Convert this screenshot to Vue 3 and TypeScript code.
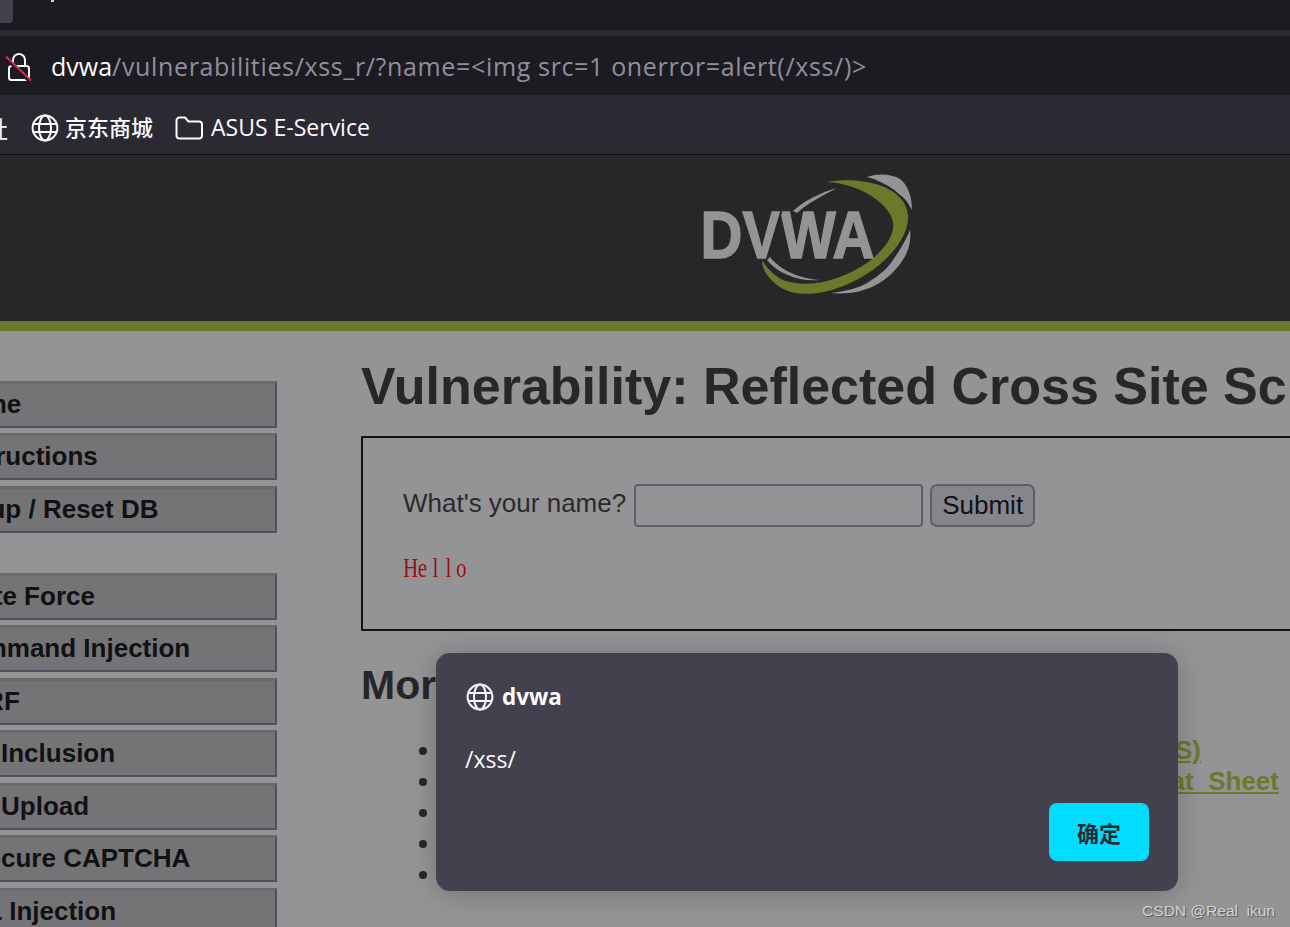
<script setup lang="ts">
const menuGroups: string[][] = [
  ['Home', 'Instructions', 'Setup / Reset DB'],
  ['Brute Force', 'Command Injection', 'CSRF', 'File Inclusion', 'File Upload', 'Insecure CAPTCHA', 'SQL Injection'],
];

const links: string[] = [
  'https://www.owasp.org/index.php/Cross-site_Scripting_(XSS)',
  'https://www.owasp.org/index.php/XSS_Filter_Evasion_Cheat_Sheet',
  'https://en.wikipedia.org/wiki/Cross-site_scripting',
  'http://www.cgisecurity.com/xss-faq.html',
  'http://www.scriptalert1.com/',
];

const hello = 'Hello'.split('');
</script>

<template>
  <div class="window">
    <div class="tabstrip">
      <div class="tab"></div>
      <span class="tab-crumb"></span>
    </div>
    <div class="urlbar">
      <svg class="lock" width="30" height="30" viewBox="0 0 30 30" fill="none">
        <path d="M9 15V9a6 6 0 0 1 12 0v6" stroke="#fbfbfe" stroke-width="2" />
        <rect x="5" y="15" width="20" height="14" rx="2.500" stroke="#fbfbfe" stroke-width="2" />
        <path d="M0 6 25 30" stroke="#1c1b22" stroke-width="3" />
        <path d="M2 5.500 27 29.500" stroke="#e22850" stroke-width="2" />
      </svg>
      <div class="url"><span class="host">dvwa</span><span class="path">/vulnerabilities/xss_r/?name=&lt;img src=1 onerror=alert(/xss/)&gt;</span></div>
    </div>
    <div class="bookmarks">
      <span class="clipped">社</span>
      <div class="bookmark">
        <svg width="28" height="28" viewBox="0 0 28 28" fill="none" stroke="#fbfbfe" stroke-width="2">
          <circle cx="14" cy="14" r="12.400" />
          <ellipse cx="14" cy="14" rx="6" ry="12.400" />
          <path d="M2.500 10h23M2.500 18h23" />
        </svg>
        <span class="cjk">京东商城</span>
      </div>
      <div class="bookmark folder">
        <svg width="28" height="26" viewBox="0 0 28 26" fill="none" stroke="#fbfbfe" stroke-width="2" stroke-linejoin="round">
          <path d="M1.500 5.500a3 3 0 0 1 3-3h5.500l3.500 4h10.500a3 3 0 0 1 3 3v11a3 3 0 0 1-3 3h-19.500a3 3 0 0 1-3-3z" />
        </svg>
        <span>ASUS E-Service</span>
      </div>
    </div>

    <header class="site-header">
      <svg class="logo" width="214" height="124" viewBox="700 173 214 124">
        <defs>
          <filter id="soft"><feGaussianBlur stdDeviation="0.7" /></filter>
        </defs>
        <g filter="url(#soft)">
          <path fill="#949496" d="M793 211C805 200 822 192 837 188C822 196 806 204 797 213zM770 257C780 270 800 279 820 280C800 282 778 274 767 260zM867 177C878 173 892 174 900 179C908 185 912 197 912 210C908 203 905 198 900 195C896 190 880 180 867 177zM910 230C912 245 906 258 895 270C882 285 860 296 830 293C848 291 858 288 867 283C880 275 888 268 893 260C900 250 906 240 910 230z" />
          <path fill="#6a7a2b" d="M827 182C860 176 905 185 908 215C910 240 880 270 850 283C825 295 797 298 780 287C768 279 762 270 762 260C768 270 778 280 790 282C815 288 845 278 867 263C885 250 895 235 893 222C890 205 862 184 827 182z" />
          <text x="700.500" y="258" class="logo-text" textLength="174" lengthAdjust="spacingAndGlyphs">DVWA</text>
          <path d="M782 209 767 259" stroke="#272729" stroke-width="2" />
        </g>
      </svg>
    </header>
    <div class="accent"></div>

    <div class="page">
      <nav class="sidebar">
        <ul v-for="(group, g) in menuGroups" :key="g" class="menu">
          <li v-for="item in group" :key="item">{{ item }}</li>
        </ul>
      </nav>
      <main class="body">
        <h1>Vulnerability: Reflected Cross Site Scripting (XSS)</h1>
        <div class="vuln-box">
          <form class="name-form" @submit.prevent>
            <label for="name">What's your name?</label>
            <input id="name" type="text" />
            <button type="button">Submit</button>
          </form>
          <div class="hello"><span v-for="(ch, i) in hello" :key="i">{{ ch }}</span></div>
        </div>
        <h2>More Information</h2>
        <ul class="links">
          <li v-for="link in links" :key="link"><a href="#">{{ link }}</a></li>
        </ul>
      </main>
    </div>

    <div class="alert" role="alertdialog">
      <div class="alert-title">
        <svg width="28" height="28" viewBox="0 0 28 28" fill="none" stroke="#fbfbfe" stroke-width="2">
          <circle cx="14" cy="14" r="12.400" />
          <ellipse cx="14" cy="14" rx="6" ry="12.400" />
          <path d="M2.500 10h23M2.500 18h23" />
        </svg>
        <strong>dvwa</strong>
      </div>
      <p class="alert-msg">/xss/</p>
      <div class="alert-foot">
        <button type="button">确定</button>
      </div>
    </div>

    <div class="watermark">CSDN @Real&nbsp;&nbsp;ikun</div>
  </div>
</template>

<style scoped>
.window {
  position: relative;
  width: 1290px;
  height: 927px;
  overflow: hidden;
  display: flex;
  flex-direction: column;
  background: #949496;
  font-family: "Liberation Sans", Arial, sans-serif;
}

.tabstrip {
  height: 30px;
  flex: none;
  background: #1c1b22;
  display: flex;
  align-items: flex-start;
}

.tab {
  width: 13px;
  height: 23px;
  background: #42414d;
  border-radius: 0 0 4px 0;
}

.tab-crumb {
  width: 3px;
  height: 2px;
  margin-left: 38px;
  background: #cfcfd4;
}

.urlbar {
  height: 59px;
  flex: none;
  margin-top: 6px;
  background: #1c1b22;
  display: flex;
  align-items: center;
  padding-left: 4px;
  gap: 17px;
  box-shadow: 0 -6px 0 #2b2a33;
}

.lock {
  flex: none;
}

.url {
  font-family: "Open Sans", "Noto Sans", sans-serif;
  font-size: 25px;
  white-space: nowrap;
}

.host {
  color: #fbfbfe;
}

.path {
  color: #8f8f9d;
  letter-spacing: 0.650px;
}

.bookmarks {
  height: 53px;
  flex: none;
  background: #2b2a33;
  border-bottom: 1px solid #111114;
  box-sizing: content-box;
  display: flex;
  align-items: center;
  padding-top: 6px;
  color: #fbfbfe;
  font-family: "Open Sans", "Noto Sans CJK SC", sans-serif;
  font-size: 23px;
}

.clipped {
  width: 8px;
  margin-right: 23px;
  direction: rtl;
  overflow: hidden;
  font-family: "Noto Sans CJK SC", sans-serif;
}

.bookmark {
  display: flex;
  align-items: center;
  gap: 6px;
  white-space: nowrap;
}

.bookmark span {
  position: relative;
  top: -1px;
}

.bookmark .cjk {
  top: -2px;
  font-family: "Noto Sans CJK SC", sans-serif;
  font-size: 22px;
  font-weight: 500;
}

.folder {
  margin-left: 22px;
  gap: 8px;
}

.site-header {
  height: 166px;
  flex: none;
  background: #272729;
  display: flex;
  align-items: flex-start;
  padding: 18px 0 0 700px;
  box-sizing: border-box;
}

.logo-text {
  font-family: "Liberation Sans", sans-serif;
  font-weight: 700;
  font-size: 67px;
  fill: #949496;
  stroke: #949496;
  stroke-width: 1.500px;
}

.accent {
  height: 10px;
  flex: none;
  background: #6a7a2b;
}

.page {
  flex: 1;
  display: flex;
  align-items: flex-start;
  min-height: 0;
}

.sidebar {
  flex: none;
  width: 347px;
  margin-left: -70px;
  padding-top: 50px;
}

.menu {
  list-style: none;
  margin: 0 0 40px;
  padding: 0;
}

.menu li {
  height: 47px;
  margin-bottom: 5.450px;
  box-sizing: border-box;
  padding-left: 19px;
  background: #747476;
  border-top: 3px solid #6a6a6c;
  border-right: 2px solid #50505f;
  border-bottom: 2px solid #50505f;
  color: #111114;
  font-size: 26px;
  font-weight: 700;
  line-height: 40px;
  white-space: nowrap;
}

.body {
  flex: none;
  margin-left: 84px;
  width: 1100px;
}

h1 {
  margin: 23px 0 0;
  color: #272729;
  font-size: 52px;
  line-height: 64px;
  font-weight: 700;
  white-space: nowrap;
}

.vuln-box {
  margin-top: 18px;
  height: 195px;
  width: 1100px;
  box-sizing: border-box;
  border: 2px solid #111114;
  padding: 46px 0 0 40px;
}

.name-form {
  display: flex;
  align-items: center;
  height: 43px;
  font-size: 26px;
  color: #2a2a2a;
}

.name-form label {
  margin-top: -4px;
  white-space: nowrap;
}

.name-form input {
  width: 289px;
  height: 43px;
  margin-left: 8px;
  box-sizing: border-box;
  padding: 0;
  border: 2px solid #5f5f68;
  border-radius: 4px;
  background: #949496;
}

.name-form button {
  width: 105px;
  height: 43px;
  margin-left: 7px;
  padding: 0;
  box-sizing: border-box;
  border: 2px solid #5f5f68;
  border-radius: 7px;
  background: #85858c;
  color: #111114;
  font-family: inherit;
  font-size: 26px;
}

.hello {
  display: flex;
  margin: 24px 0 0;
  font-family: "Liberation Serif", serif;
  font-size: 28px;
  line-height: 34px;
  color: #9c0d0d;
  transform: scaleX(0.75);
  transform-origin: left center;
}

.hello span {
  width: 17.300px;
  text-align: center;
}

h2 {
  margin: 29px 0 0;
  color: #272729;
  font-size: 41px;
  line-height: 50px;
  font-weight: 700;
  white-space: nowrap;
}

.links {
  margin: 25px 0 0;
  padding: 0 0 0 81px;
  color: #272729;
  font-size: 26px;
  line-height: 31px;
  white-space: nowrap;
}

.links a {
  color: #6a7a2b;
  font-weight: 700;
}

.alert {
  position: absolute;
  left: 436px;
  top: 653px;
  width: 742px;
  height: 238px;
  box-sizing: border-box;
  padding: 28px 29px 30px 30px;
  border-radius: 14px;
  background: #42414d;
  color: #fbfbfe;
  box-shadow: 0 2px 28px rgba(0, 0, 0, 0.22);
  font-family: "Open Sans", "Noto Sans CJK SC", sans-serif;
  display: flex;
  flex-direction: column;
}

.alert-title {
  display: flex;
  align-items: center;
  gap: 8px;
  font-size: 22.500px;
}

.alert-msg {
  margin: 31px 0 0;
  margin-left: -1px;
  font-size: 23px;
  line-height: 32px;
  flex: 1;
}

.alert-foot {
  display: flex;
  justify-content: flex-end;
}

.alert-foot button {
  width: 100px;
  height: 58px;
  border: 0;
  border-radius: 8px;
  background: #00ddff;
  color: #2b2a33;
  font-family: "Noto Sans CJK SC", sans-serif;
  font-size: 22px;
  font-weight: 700;
}

.watermark {
  position: absolute;
  right: 15px;
  bottom: 7px;
  font-size: 15.500px;
  line-height: 18px;
  color: #d4d4d6;
  text-shadow: 1px 1px 1px #555;
  white-space: nowrap;
}
</style>
